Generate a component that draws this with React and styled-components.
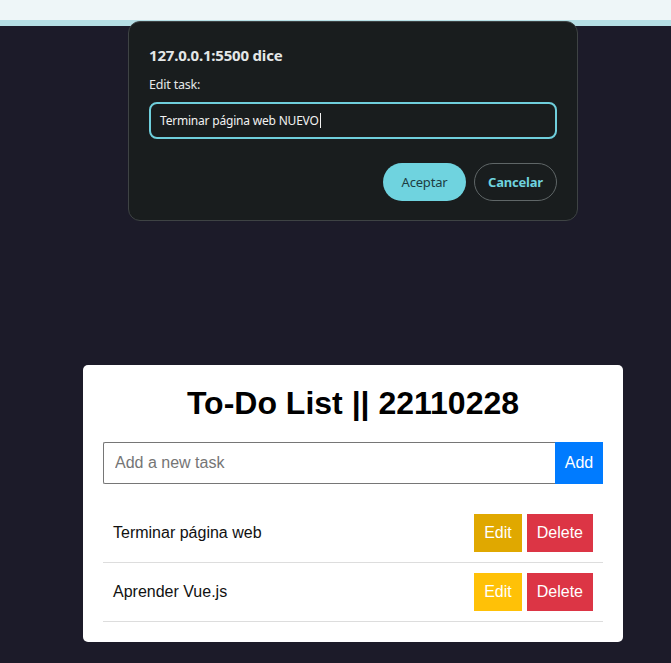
import React from 'react'
import styled, { createGlobalStyle } from 'styled-components'

const Global = createGlobalStyle`
  html, body {
    margin: 0;
    padding: 0;
    background: #1c1b29;
  }
  * { box-sizing: border-box; }
`

const Page = styled.div`
  position: relative;
  width: 671px;
  height: 663px;
  overflow: hidden;
  background: #1c1b29;
  font-family: "Liberation Sans", Arial, sans-serif;
`

const TopBar = styled.div`
  height: 20px;
  background: #eef6f8;
  border-bottom: 6px solid #b6dfe5;
  box-sizing: content-box;
`

const Main = styled.main`
  padding: 339px 0 0 83px;
`

const Card = styled.div`
  width: 540px;
  background: #fff;
  border-radius: 5px;
  padding: 20px;
`

const Title = styled.h1`
  margin: 0 0 20px;
  height: 37px;
  line-height: 37px;
  text-align: center;
  font-size: 32px;
  font-weight: bold;
  color: #000;
`

const AddRow = styled.div`
  display: flex;
`

const TaskInput = styled.input`
  flex: 1;
  height: 42px;
  padding: 0 11px;
  font-family: inherit;
  font-size: 16px;
  border: 1px solid #767676;
  border-right: none;
  border-radius: 2px 0 0 2px;
  outline: none;
  &::placeholder { color: #757575; }
`

const AddButton = styled.button`
  width: 48px;
  height: 42px;
  border: none;
  background: #007bff;
  color: #fff;
  font-family: inherit;
  font-size: 16px;
  padding: 0;
`

const List = styled.ul`
  list-style: none;
  margin: 20px 0 0;
  padding: 0;
`

const Item = styled.li`
  display: flex;
  align-items: center;
  justify-content: space-between;
  padding: 10px;
  border-bottom: 1px solid #ddd;
  font-size: 16px;
  color: #111;
`

const Actions = styled.div`
  display: flex;
  gap: 5px;
`

const ActionButton = styled.button`
  height: 38px;
  padding: 0 10px;
  border: none;
  font-family: inherit;
  font-size: 16px;
  color: #fff;
  background: ${p => p.$bg};
`

const Dialog = styled.div`
  position: absolute;
  top: 21px;
  left: 128px;
  width: 450px;
  height: 200px;
  background: #191d1e;
  border: 1px solid #3e4344;
  border-radius: 12px;
  padding: 23px 20px 0 20px;
  font-family: "Noto Sans", "Open Sans", sans-serif;
  color: #e4e7e7;
`

const DialogTitle = styled.div`
  font-size: 15px;
  font-weight: bold;
  line-height: 20px;
  letter-spacing: -0.2px;
`

const DialogLabel = styled.div`
  margin-top: 11px;
  font-size: 12.5px;
  line-height: 18px;
  letter-spacing: -0.2px;
`

const DialogInput = styled.div`
  margin-top: 8px;
  height: 37px;
  border: 2px solid #6fcfdc;
  border-radius: 8px;
  padding: 0 9px;
  display: flex;
  align-items: center;
  font-size: 12px;
  color: #f2f2f2;
  letter-spacing: -0.2px;
`

const Caret = styled.span`
  display: inline-block;
  width: 1px;
  height: 15px;
  margin-left: 1px;
  background: #f2f2f2;
`

const DialogActions = styled.div`
  display: flex;
  justify-content: flex-end;
  gap: 8px;
  margin-top: 24px;
`

const DialogButton = styled.button`
  width: 83px;
  height: 38px;
  border-radius: 19px;
  font-family: inherit;
  font-size: 13px;
  font-weight: ${p => (p.$primary ? 'normal' : 'bold')};
  letter-spacing: -0.2px;
  background: ${p => (p.$primary ? '#6fd3df' : 'transparent')};
  color: ${p => (p.$primary ? '#1d3d42' : '#6fd3df')};
  border: ${p => (p.$primary ? 'none' : '1px solid #5f6667')};
  padding: 0;
`

const tasks = [
  { text: 'Terminar página web', edit: '#e0a800' },
  { text: 'Aprender Vue.js', edit: '#ffc107' }
]

export default function App() {
  return (
    <>
      <Global />
      <Page>
        <TopBar />
        <Main>
          <Card>
            <Title>To-Do List || 22110228</Title>
            <AddRow>
              <TaskInput placeholder="Add a new task" />
              <AddButton>Add</AddButton>
            </AddRow>
            <List>
              {tasks.map(t => (
                <Item key={t.text}>
                  <span>{t.text}</span>
                  <Actions>
                    <ActionButton $bg={t.edit}>Edit</ActionButton>
                    <ActionButton $bg="#dc3545">Delete</ActionButton>
                  </Actions>
                </Item>
              ))}
            </List>
          </Card>
        </Main>
        <Dialog>
          <DialogTitle>127.0.0.1:5500 dice</DialogTitle>
          <DialogLabel>Edit task:</DialogLabel>
          <DialogInput>
            Terminar página web NUEVO<Caret />
          </DialogInput>
          <DialogActions>
            <DialogButton $primary>Aceptar</DialogButton>
            <DialogButton>Cancelar</DialogButton>
          </DialogActions>
        </Dialog>
      </Page>
    </>
  )
}
